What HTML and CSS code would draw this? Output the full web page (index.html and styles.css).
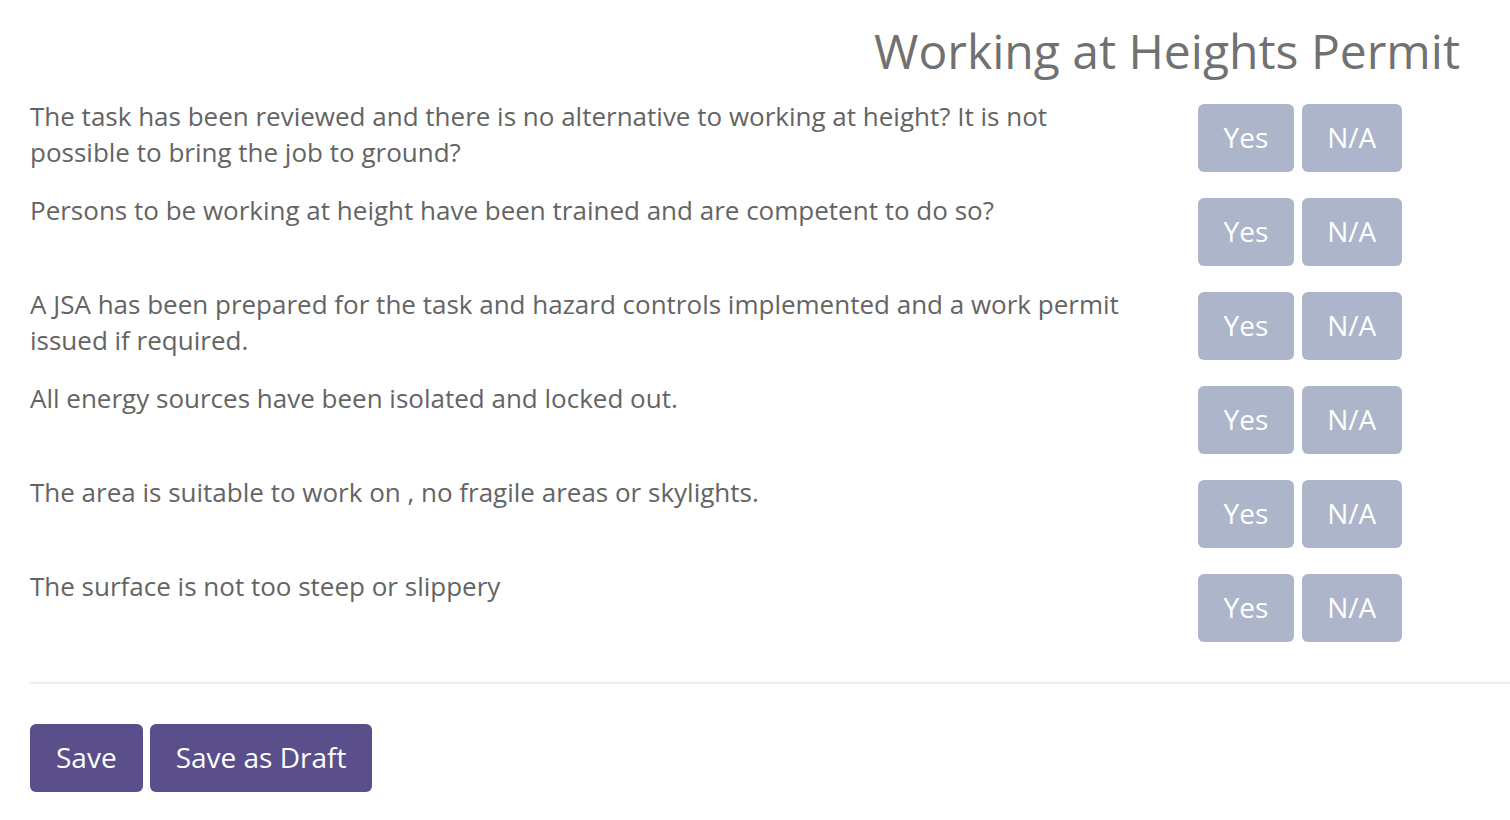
FILE: index.html
```html
<!DOCTYPE html>
<html lang="en">
<head>
<meta charset="utf-8">
<title>Working at Heights Permit</title>
<link rel="stylesheet" href="styles.css">
</head>
<body>
<div class="page">
  <h1 class="title">Working at Heights Permit</h1>
  <div class="questions">
    <div class="question">
      <div class="question-text">The task has been reviewed and there is no alternative to working at height? It is not possible to bring the job to ground?</div>
      <div class="choices"><button class="choice">Yes</button><button class="choice">N/A</button></div>
    </div>
    <div class="question">
      <div class="question-text">Persons to be working at height have been trained and are competent to do so?</div>
      <div class="choices"><button class="choice">Yes</button><button class="choice">N/A</button></div>
    </div>
    <div class="question">
      <div class="question-text">A JSA has been prepared for the task and hazard controls implemented and a work permit issued if required.</div>
      <div class="choices"><button class="choice">Yes</button><button class="choice">N/A</button></div>
    </div>
    <div class="question">
      <div class="question-text">All energy sources have been isolated and locked out.</div>
      <div class="choices"><button class="choice">Yes</button><button class="choice">N/A</button></div>
    </div>
    <div class="question">
      <div class="question-text">The area is suitable to work on , no fragile areas or skylights.</div>
      <div class="choices"><button class="choice">Yes</button><button class="choice">N/A</button></div>
    </div>
    <div class="question">
      <div class="question-text">The surface is not too steep or slippery</div>
      <div class="choices"><button class="choice">Yes</button><button class="choice">N/A</button></div>
    </div>
  </div>
  <hr class="divider">
  <div class="actions">
    <button class="action">Save</button>
    <button class="action">Save as Draft</button>
  </div>
</div>
</body>
</html>
```
FILE: styles.css
```css
html, body {
  margin: 0;
  padding: 0;
  background: #ffffff;
  overflow: hidden;
}

body {
  font-family: "Open Sans", "DejaVu Sans", sans-serif;
  color: #666666;
}

.page {
  padding: 25px 0 0 30px;
}

.title {
  margin: 0 50px 20px 0;
  font-size: 48px;
  line-height: 1.1;
  font-weight: 400;
  color: #717171;
  text-align: right;
}

.questions {
  display: flex;
  flex-direction: column;
}

.question {
  display: grid;
  grid-template-columns: 1110px auto;
  column-gap: 58px;
  align-items: start;
  padding-bottom: 20px;
}

.question-text {
  font-size: 26px;
  line-height: 36px;
  color: #646464;
}

.choices {
  display: flex;
  gap: 8px;
  margin-top: 6px;
}

.choice,
.action {
  font-family: "Open Sans", "DejaVu Sans", sans-serif;
  font-size: 28px;
  line-height: 42px;
  border: 1px solid transparent;
  border-radius: 6px;
  color: #ffffff;
  cursor: pointer;
}

.choice {
  padding: 11px 24.5px 13px;
  background: #adb5ca;
}

.divider {
  margin: 20px 0 0 0;
  border: 0;
  border-top: 2px solid #eeeeee;
  height: 0;
}

.actions {
  display: flex;
  gap: 7px;
  margin-top: 40px;
}

.action {
  padding: 11px 25px 13px;
  background: #5a4f8b;
}
```
